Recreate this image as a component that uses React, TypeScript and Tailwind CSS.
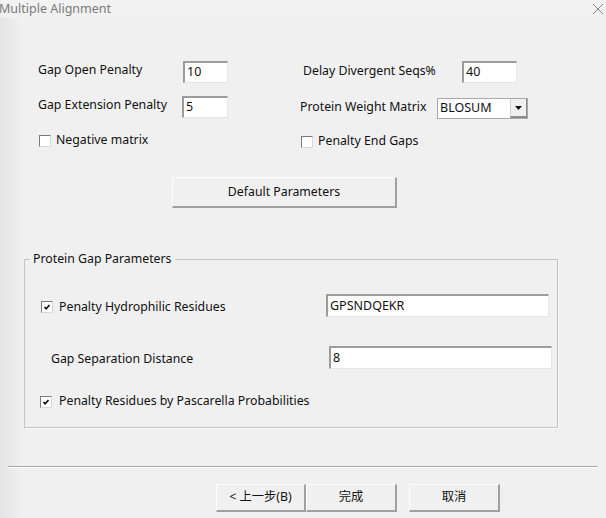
import React from "react";

const font = { fontFamily: '"Noto Sans", "Noto Sans CJK SC", sans-serif' };

function Field({ value, w, h = 22 }: { value: string; w: number; h?: number }) {
  return (
    <div
      className="bg-white border-t-2 border-l-2 border-b border-r border-t-[#9c9c9c] border-l-[#9c9c9c] border-b-[#e6e6e6] border-r-[#e6e6e6] flex items-center pl-[2px] text-[12.5px] text-[#111]"
      style={{ width: w, height: h }}
    >
      {value}
    </div>
  );
}

function Check({ checked }: { checked?: boolean }) {
  return (
    <div className="w-[12px] h-[12px] bg-white border-t border-l border-t-[#7a7a7a] border-l-[#7a7a7a] border-b border-r border-b-[#d8d8d8] border-r-[#d8d8d8] flex items-center justify-center shrink-0">
      {checked && (
        <svg width="8" height="8" viewBox="0 0 8 8">
          <path d="M1.5 4 L3.2 5.8 L6.5 2" stroke="#111" strokeWidth="1.7" fill="none" />
        </svg>
      )}
    </div>
  );
}

function Btn({ children, w, h }: { children: React.ReactNode; w: number; h: number }) {
  return (
    <div
      className="bg-[#f0f0f0] border-t border-l border-t-[#fcfcfc] border-l-[#fcfcfc] border-b-2 border-r-2 border-b-[#a0a0a0] border-r-[#a0a0a0] flex items-center justify-center text-[12.3px] text-[#111] shrink-0"
      style={{ width: w, height: h }}
    >
      {children}
    </div>
  );
}

export default function App() {
  return (
    <div
      className="w-[606px] h-[518px] overflow-hidden bg-[linear-gradient(to_right,#e4e4e4,#f0f0f0_22px)] text-[#111] text-[12.3px]"
      style={font}
    >
      {/* title bar */}
      <div className="h-[18px] flex items-center justify-between bg-[linear-gradient(to_bottom,#f3f3f3,#f0f0f0)]">
        <span className="text-[12.5px] text-[#7b7b7b] leading-none -ml-px">Multiple Alignment</span>
        <svg width="12" height="12" viewBox="0 0 12 12" className="mr-[2px]">
          <path d="M1 1 L11 11 M11 1 L1 11" stroke="#888" strokeWidth="1" />
        </svg>
      </div>

      {/* top parameters */}
      <div className="flex mt-[43px]">
        <div className="ml-[38px] w-[262px] flex flex-col">
          <div className="flex items-center h-[22px]">
            <span className="w-[145px] -mt-[4px]">Gap Open Penalty</span>
            <Field value="10" w={45} />
          </div>
          <div className="flex items-center h-[22px] mt-[13px]">
            <span className="w-[144px] -mt-[3px]">Gap Extension Penalty</span>
            <Field value="5" w={46} />
          </div>
          <div className="flex items-center mt-[16px] ml-px h-[13px]">
            <Check />
            <span className="ml-[5px]">Negative matrix</span>
          </div>
        </div>
        <div className="flex flex-col">
          <div className="flex items-center h-[22px]">
            <span className="w-[162px] pl-[3px] -mt-[2px]">Delay Divergent Seqs%</span>
            <Field value="40" w={55} />
          </div>
          <div className="flex items-center h-[21px] mt-[15px]">
            <span className="w-[137px] -mt-[2px]">Protein Weight Matrix</span>
            <div className="w-[91px] h-[21px] bg-white border border-[#a8a8a8] flex items-center">
              <span className="flex-1 pl-[2px] text-[12.5px]">BLOSUM</span>
              <div className="w-[17px] h-[19px] bg-[#f0f0f0] border-l border-[#d0d0d0] border-b-2 border-r border-b-[#8a8a8a] border-r-[#8a8a8a] flex items-center justify-center">
                <svg width="7" height="4" viewBox="0 0 7 4">
                  <path d="M0 0 H7 L3.5 4 Z" fill="#111" />
                </svg>
              </div>
            </div>
          </div>
          <div className="flex items-center mt-[16px] ml-px h-[13px]">
            <Check />
            <span className="ml-[5px]">Penalty End Gaps</span>
          </div>
        </div>
      </div>

      {/* default button */}
      <div className="ml-[172px] mt-[29px]">
        <Btn w={225} h={31}>Default Parameters</Btn>
      </div>

      {/* group box */}
      <fieldset className="ml-[24px] mt-[43px] w-[534px] h-[177px] border border-[#c4c4c4] shadow-[1px_1px_0_#fafafa] px-0 pb-0">
        <legend className="ml-[5px] px-[3px] leading-[16px]">Protein Gap Parameters</legend>
        <div className="flex items-center mt-[27px] h-[23px]">
          <div className="ml-[16px] w-[285px] flex items-center mt-[3px]">
            <Check checked />
            <span className="ml-[6px]">Penalty Hydrophilic Residues</span>
          </div>
          <Field value="GPSNDQEKR" w={223} h={23} />
        </div>
        <div className="flex items-center mt-[29px] h-[23px]">
          <span className="ml-[26px] w-[278px] mt-[3px]">Gap Separation Distance</span>
          <Field value="8" w={223} h={23} />
        </div>
        <div className="flex items-center mt-[26px] ml-[15px] h-[13px]">
          <Check checked />
          <span className="ml-[7px]">Penalty Residues by Pascarella Probabilities</span>
        </div>
      </fieldset>

      {/* separator */}
      <div className="ml-[8px] mt-[38px] w-[590px] h-[2px] border-t border-t-[#a8a8a8] border-b border-b-[#ffffff]" />

      {/* bottom buttons */}
      <div className="flex ml-[216px] mt-[16px]">
        <Btn w={90} h={28}>&lt; 上一步(B)</Btn>
        <Btn w={91} h={28}>完成</Btn>
        <div className="w-[12px]" />
        <Btn w={91} h={28}>取消</Btn>
      </div>
    </div>
  );
}
